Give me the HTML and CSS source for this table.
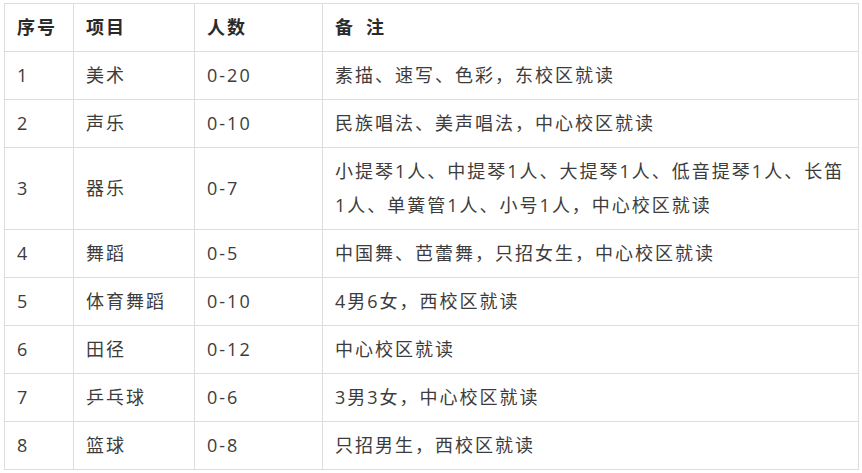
FILE: index.html
```html
<!DOCTYPE html>
<html lang="zh-CN">
<head>
<meta charset="utf-8">
<title>招生项目</title>
<link rel="stylesheet" href="styles.css">
</head>
<body>
<div class="wrap">
<table class="plan">
<colgroup>
<col class="c-no">
<col class="c-item">
<col class="c-num">
<col class="c-note">
</colgroup>
<thead>
<tr><th>序号</th><th>项目</th><th>人数</th><th>备&ensp;注</th></tr>
</thead>
<tbody>
<tr><td>1</td><td>美术</td><td>0-20</td><td>素描、速写、色彩，东校区就读</td></tr>
<tr><td>2</td><td>声乐</td><td>0-10</td><td>民族唱法、美声唱法，中心校区就读</td></tr>
<tr><td>3</td><td>器乐</td><td>0-7</td><td>小提琴1人、中提琴1人、大提琴1人、低音提琴1人、长笛1人、单簧管1人、小号1人，中心校区就读</td></tr>
<tr><td>4</td><td>舞蹈</td><td>0-5</td><td>中国舞、芭蕾舞，只招女生，中心校区就读</td></tr>
<tr><td>5</td><td>体育舞蹈</td><td>0-10</td><td>4男6女，西校区就读</td></tr>
<tr><td>6</td><td>田径</td><td>0-12</td><td>中心校区就读</td></tr>
<tr><td>7</td><td>乒乓球</td><td>0-6</td><td>3男3女，中心校区就读</td></tr>
<tr><td>8</td><td>篮球</td><td>0-8</td><td>只招男生，西校区就读</td></tr>
</tbody>
</table>
</div>
</body>
</html>
```
FILE: styles.css
```css
html, body {
  margin: 0;
  padding: 0;
  background: #fff;
}
.wrap {
  padding: 3px 0 0 4px;
}
.plan {
  width: 855px;
  table-layout: fixed;
  border-collapse: collapse;
  font-family: "Open Sans", "Noto Sans CJK SC", sans-serif;
  font-size: 18px;
  letter-spacing: 2px;
  color: #3c3c3c;
}
.c-no { width: 69px; }
.c-item { width: 121px; }
.c-num { width: 128px; }
.plan th,
.plan td {
  border: 1px solid #ddd;
  padding: 6px 8px 7px 12px;
  line-height: 34px;
  text-align: left;
  vertical-align: middle;
}
.plan th {
  font-weight: bold;
  color: #2a2a2a;
}
```
